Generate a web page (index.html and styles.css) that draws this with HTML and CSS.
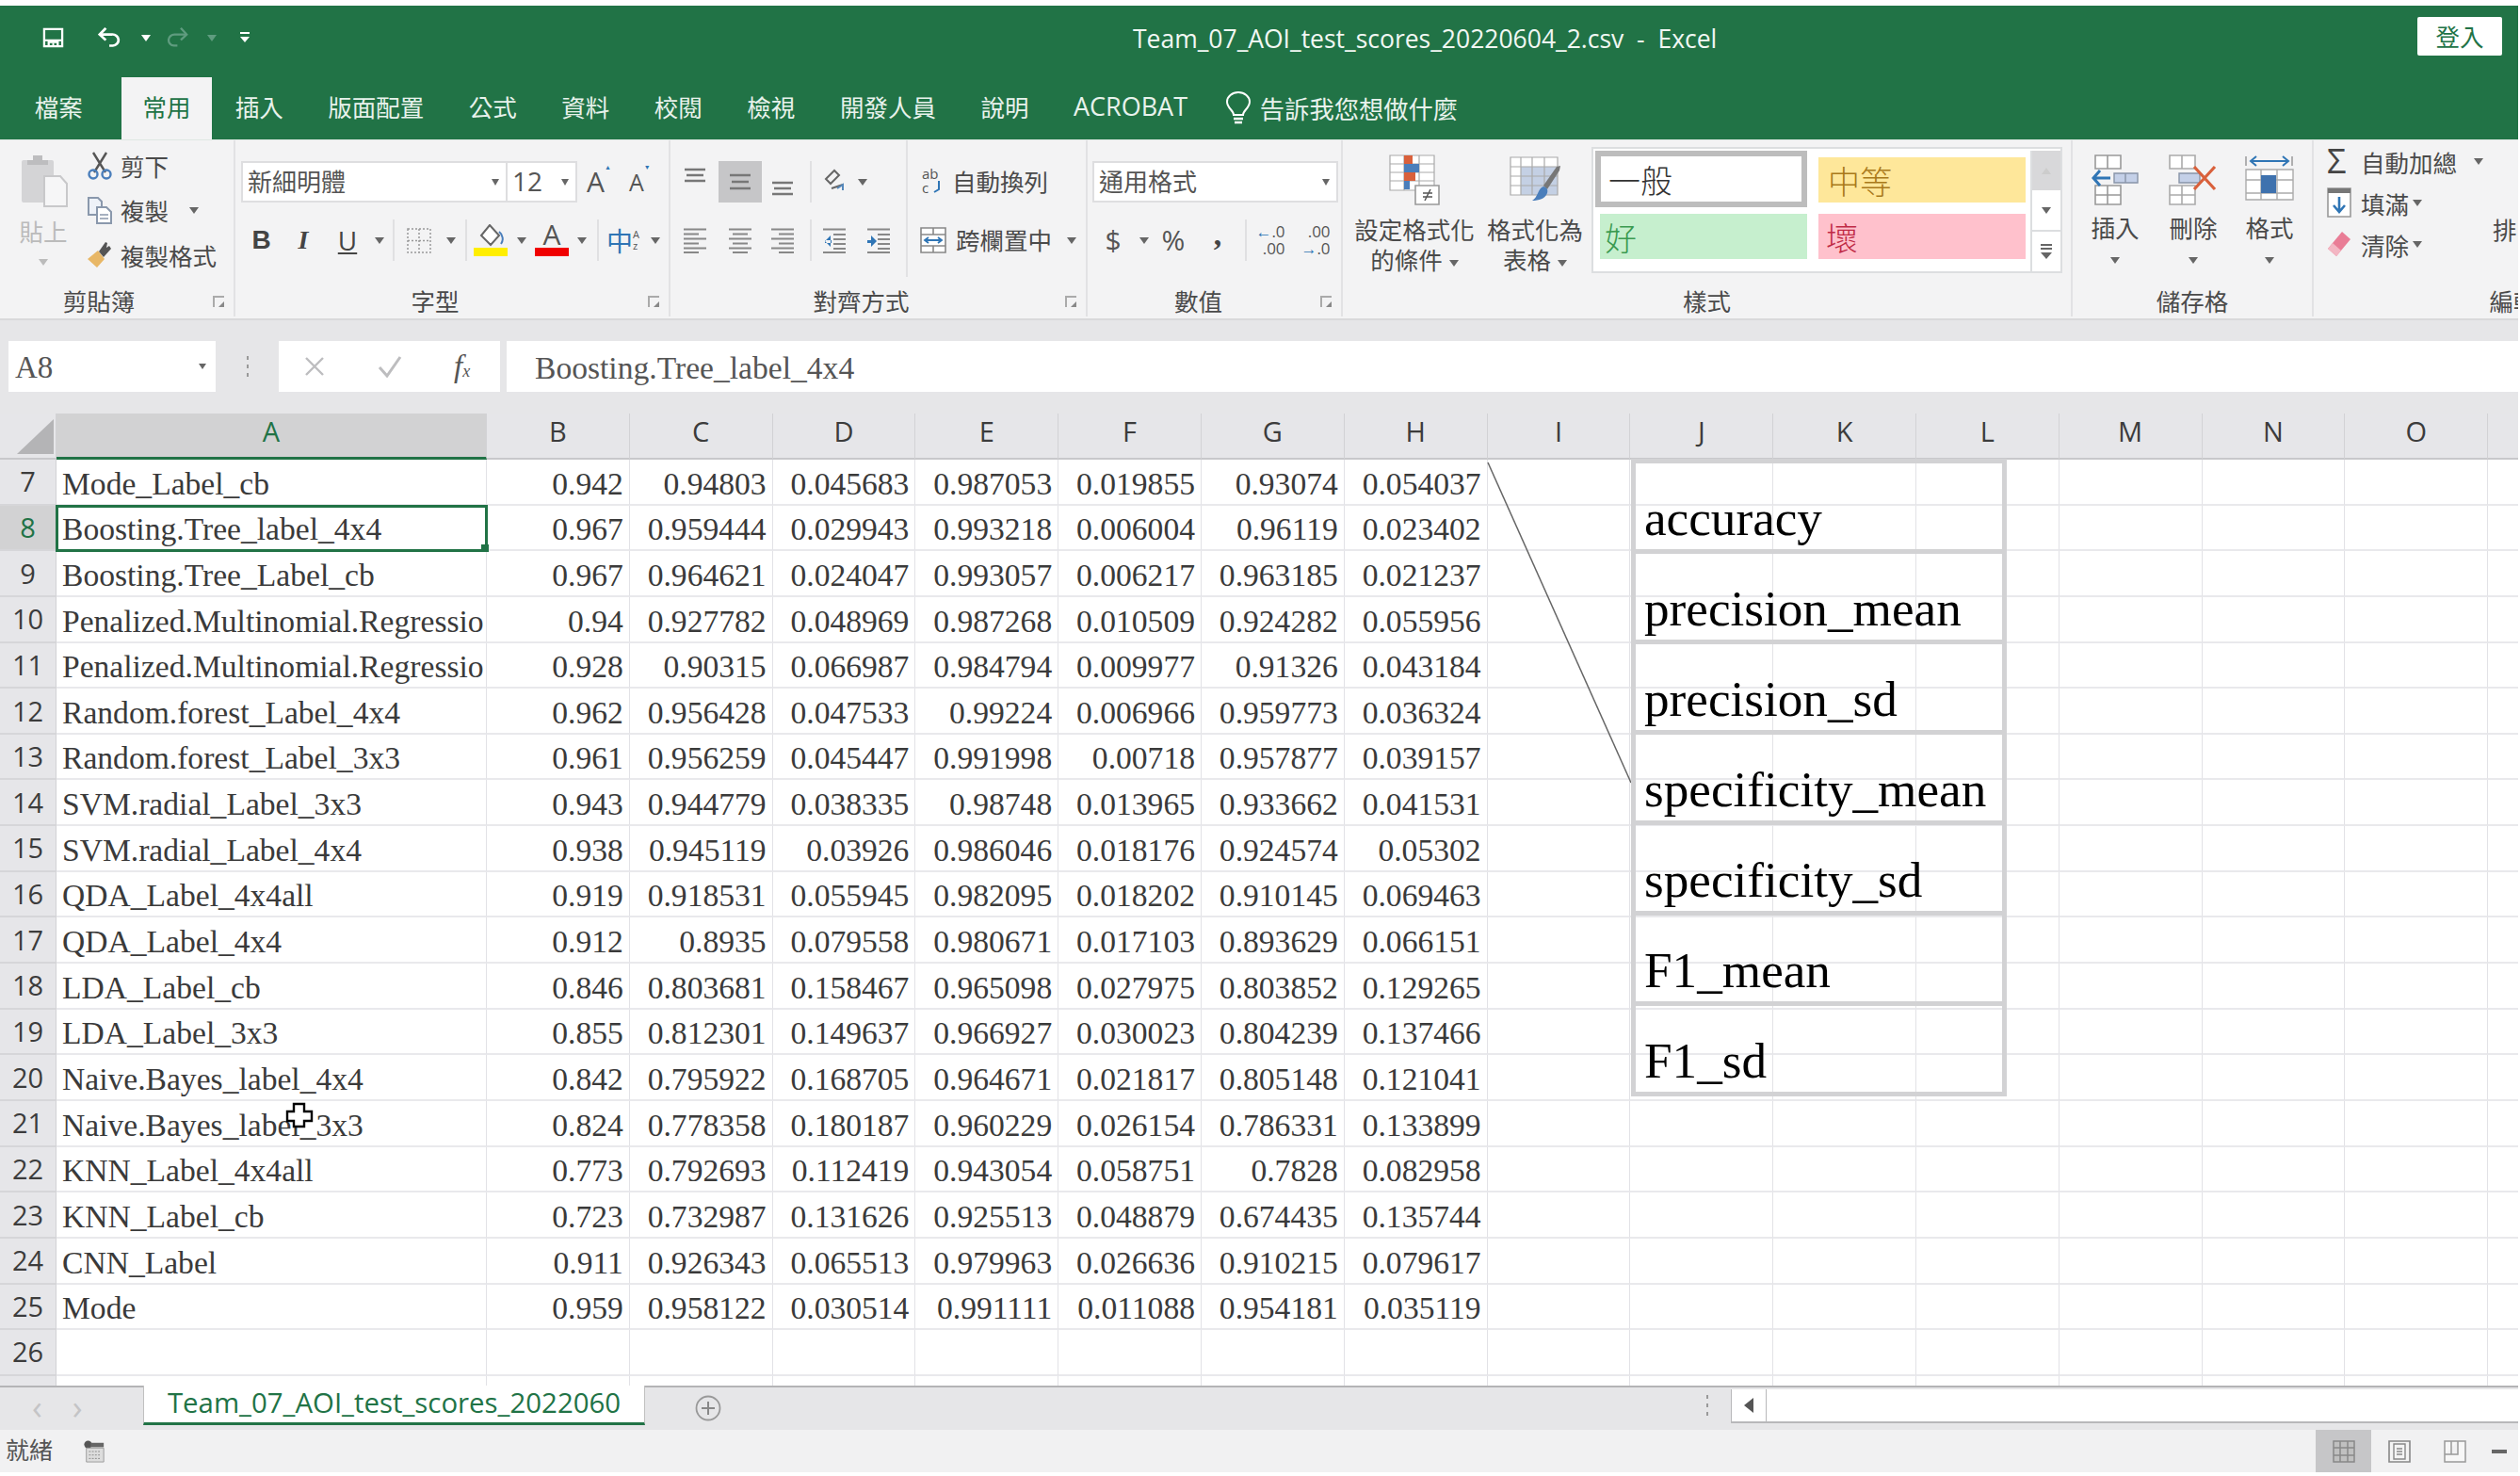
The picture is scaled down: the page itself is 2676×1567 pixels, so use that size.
FILE: index.html
```html
<!DOCTYPE html>
<html lang="zh-Hant">
<head>
<meta charset="utf-8">
<title>Team_07_AOI_test_scores_20220604_2.csv - Excel</title>
<link rel="stylesheet" href="styles.css">
</head>
<body>
<div class="app">
  <header class="titlebar">
    <div class="qat">
      <svg class="ic-save" width="23" height="22" viewBox="0 0 24 24" preserveAspectRatio="none"><path d="M2 2h20v20H2z" fill="none" stroke="#fff" stroke-width="2.4"/><path d="M2 15h20M7 22v-5h10v5" fill="none" stroke="#fff" stroke-width="2.4"/><path d="M12 18v4" stroke="#fff" stroke-width="2"/></svg>
      <svg class="ic-undo" width="26" height="22" viewBox="0 0 28 26" preserveAspectRatio="none"><path d="M3 9h13a7 7 0 0 1 1 14h-4" fill="none" stroke="#fff" stroke-width="3"/><path d="M9 1 2 9l7 7" fill="none" stroke="#fff" stroke-width="3"/></svg>
      <i class="arr arr-w"></i>
      <svg class="ic-redo" width="25" height="22" viewBox="0 0 28 26" preserveAspectRatio="none"><path d="M25 9H12a7 7 0 0 0-1 14h4" fill="none" stroke="#5f9c7f" stroke-width="2.6"/><path d="m19 1 7 8-7 7" fill="none" stroke="#5f9c7f" stroke-width="2.6"/></svg>
      <i class="arr arr-dim"></i>
      <svg class="ic-cust" width="10" height="12" viewBox="0 0 10 12"><path d="M0 0h10v2H0zM0 5h10L5 11z" fill="#fff"/></svg>
    </div>
    <div class="doc-title">Team_07_AOI_test_scores_20220604_2.csv&nbsp; - &nbsp;Excel</div>
    <div class="signin">登入</div>
  </header>

  <nav class="tabs">
    <span class="tab tab-file">檔案</span>
    <span class="tab tab-on">常用</span>
    <span class="tab">插入</span>
    <span class="tab">版面配置</span>
    <span class="tab">公式</span>
    <span class="tab">資料</span>
    <span class="tab">校閱</span>
    <span class="tab">檢視</span>
    <span class="tab">開發人員</span>
    <span class="tab">說明</span>
    <span class="tab tab-latin">ACROBAT</span>
    <span class="tell">
      <svg width="28" height="36" viewBox="0 0 28 36"><path d="M9 25c0-5-7-7-7-14a12 10 0 0 1 24 0c0 7-7 9-7 14z" fill="none" stroke="#fff" stroke-width="2"/><path d="M9 29h10M10 33h8" stroke="#fff" stroke-width="2.4"/></svg>
      <span>告訴我您想做什麼</span>
    </span>
  </nav>

  <section class="ribbon">
    <div class="group g-clip">
      <div class="gbody clip-body">
        <div class="paste">
          <svg width="52" height="56" viewBox="0 0 52 56"><rect x="2" y="6" width="34" height="45" rx="2" fill="#d4d4d6"/><path d="M14 6V1h10v5h6v5H8V6z" fill="#bdbdbf"/><path d="M26 23h17l7 8v24H26z" fill="#f6f6f7" stroke="#c8c8ca" stroke-width="2"/></svg>
          <span class="paste-t">貼上</span>
          <i class="arr arr-pale"></i>
        </div>
        <div class="clip-list">
          <div class="clip-row">
            <svg width="28" height="30" viewBox="0 0 28 30"><path d="m7 1 13 21M21 1 8 22" stroke="#555" stroke-width="2.4" fill="none"/><circle cx="7" cy="24" r="4.5" fill="none" stroke="#4a7ebb" stroke-width="2.4"/><circle cx="21" cy="24" r="4.5" fill="none" stroke="#4a7ebb" stroke-width="2.4"/></svg>
            <span>剪下</span>
          </div>
          <div class="clip-row">
            <svg width="28" height="30" viewBox="0 0 28 30"><path d="M2 2h10l4 4v14H2z" fill="#eef2f8" stroke="#8a98ac" stroke-width="2"/><path d="M11 12h10l5 5v12H11z" fill="#fff" stroke="#8a98ac" stroke-width="2"/><path d="M14 20h9M14 24h9" stroke="#8a98ac" stroke-width="1.6"/></svg>
            <span>複製</span><i class="arr clip-arr"></i>
          </div>
          <div class="clip-row">
            <svg width="28" height="30" viewBox="0 0 28 30"><path d="M1 19 12 10l7 9-8 9z" fill="#e8b766"/><path d="m13 11 5 6 8-9-2-3-3 2 1-5-2-1z" fill="#555"/></svg>
            <span>複製格式</span>
          </div>
        </div>
      </div>
      <div class="glabel">剪貼簿<i class="launch"></i></div>
    </div>

    <div class="group g-font">
      <div class="gbody stack">
        <div class="font-r1">
          <div class="combo combo-name"><span>新細明體</span><i class="arr"></i></div>
          <div class="combo combo-size"><span>12</span><i class="arr"></i></div>
          <span class="grow big">A<sup>▲</sup></span>
          <span class="grow small">A<sup>▼</sup></span>
        </div>
        <div class="font-r2 row2">
          <b class="fb">B</b>
          <em class="fi">I</em>
          <span class="fu">U</span>
          <i class="arr"></i><i class="sep"></i>
          <svg width="26" height="27" viewBox="0 0 26 27"><path d="M1 1h24v25H1zM1 13.500h24M13 1v25" fill="none" stroke="#999" stroke-width="1.5" stroke-dasharray="2 2"/></svg>
          <i class="arr"></i><i class="sep"></i>
          <svg width="36" height="34" viewBox="0 0 36 34"><path d="m17 1 10 11-9 10L8 12z" fill="#fff" stroke="#666" stroke-width="2"/><path d="M27 8c4 3 5 9 2 13" fill="none" stroke="#4a7ebb" stroke-width="2"/><rect y="25" width="36" height="9" fill="#ffee00"/></svg>
          <i class="arr"></i>
          <svg width="36" height="34" viewBox="0 0 36 34"><text x="18" y="22" text-anchor="middle" class="svg-a">A</text><rect y="25" width="36" height="9" fill="#f00000"/></svg>
          <i class="arr"></i><i class="sep"></i>
          <span class="zh">中<small>A<br>z</small></span>
          <i class="arr"></i>
        </div>
      </div>
      <div class="glabel">字型<i class="launch"></i></div>
    </div>

    <div class="group g-align">
      <div class="gbody align-body">
        <div class="align-l stack">
          <div class="align-r1">
            <svg class="al" width="24" height="34" viewBox="0 0 24 34"><path d="M1 4h22M3 10h18M1 16h22" stroke="#777" stroke-width="2.4"/></svg>
            <span class="al-on"><svg width="24" height="20" viewBox="0 0 24 20"><path d="M1 3h22M3 10h18M1 17h22" stroke="#777" stroke-width="2.4"/></svg></span>
            <svg class="al" width="24" height="34" viewBox="0 0 24 34"><path d="M1 18h22M3 24h18M1 30h22" stroke="#777" stroke-width="2.4"/></svg>
            <i class="sep"></i>
            <svg width="22" height="30" viewBox="0 0 22 30"><path d="m2 12 9-9 5 5-9 9zM8 22l12-4" fill="none" stroke="#666" stroke-width="2"/><path d="m14 22 6-4v6" fill="none" stroke="#5588bb" stroke-width="2"/></svg>
            <i class="arr"></i>
          </div>
          <div class="align-r2 row2">
            <svg width="24" height="27" viewBox="0 0 24 27"><path d="M0 1.500h24M0 6.500h16M0 11.500h24M0 16.500h16M0 21.500h24M0 26h16" stroke="#888" stroke-width="1.800"/></svg>
            <svg width="24" height="27" viewBox="0 0 24 27"><path d="M0 1.500h24M4 6.500h16M0 11.500h24M4 16.500h16M0 21.500h24M4 26h16" stroke="#888" stroke-width="1.800"/></svg>
            <svg width="24" height="27" viewBox="0 0 24 27"><path d="M0 1.500h24M8 6.500h16M0 11.500h24M8 16.500h16M0 21.500h24M8 26h16" stroke="#888" stroke-width="1.800"/></svg>
            <i class="sep"></i>
            <svg width="26" height="27" viewBox="0 0 26 27"><path d="M1 1.500h24M12 7h13M12 12h13M12 17h13M12 22h13M1 26h24" stroke="#888" stroke-width="1.800"/><path d="M9 8 3 14l6 6zM3 13h7v3H3z" fill="#2f75b5"/></svg>
            <svg width="26" height="27" viewBox="0 0 26 27"><path d="M1 1.500h24M12 7h13M12 12h13M12 17h13M12 22h13M1 26h24" stroke="#888" stroke-width="1.800"/><path d="m5 8 6 6-6 6zM1 13h6v3H1z" fill="#2f75b5"/></svg>
          </div>
        </div>
        <div class="align-m stack">
          <div class="ic-row">
            <svg width="24" height="30" viewBox="0 0 24 30"><text x="2" y="12" class="svg-ab">ab</text><text x="2" y="27" class="svg-ab">c</text><path d="M20 14v9l-5 3" fill="none" stroke="#2f75b5" stroke-width="2"/></svg>
            <span>自動換列</span>
          </div>
          <div class="ic-row row2">
            <svg width="28" height="28" viewBox="0 0 28 28"><path d="M1 1h26v26H1zM1 8h26M1 20h26M14 1v7M14 20v7" fill="#fff" stroke="#888" stroke-width="1.6"/><path d="M5 14h18M9 11l-4 3 4 3M19 11l4 3-4 3" fill="none" stroke="#2f75b5" stroke-width="1.800"/></svg>
            <span>跨欄置中</span><i class="arr merge-arr"></i>
          </div>
        </div>
      </div>
      <div class="glabel">對齊方式<i class="launch"></i></div>
    </div>

    <div class="group g-num">
      <div class="gbody stack">
        <div class="num-r1">
          <div class="combo combo-num"><span>通用格式</span><i class="arr"></i></div>
        </div>
        <div class="num-r2 row2">
          <span class="dollar">$</span>
          <i class="arr"></i>
          <span class="pct">%</span>
          <span class="comma">,</span>
          <i class="sep"></i>
          <span class="dec"><em>←</em>.0<br>.00</span>
          <span class="dec">.00<br><em>→</em>.0</span>
        </div>
      </div>
      <div class="glabel">數值<i class="launch"></i></div>
    </div>

    <div class="group g-style">
      <div class="gbody style-body">
        <div class="bigbtn bb-cond">
          <svg width="54" height="54" viewBox="0 0 54 54"><path d="M1 1h47v37H1zM1 10h47M1 19h47M1 28h47M16 1v37M32 1v37" fill="#fff" stroke="#aaa" stroke-width="1.2"/><rect x="16" y="1" width="9" height="9" fill="#d9603b"/><rect x="16" y="10" width="16" height="9" fill="#4a7ebb"/><rect x="16" y="19" width="12" height="9" fill="#d9603b"/><rect x="16" y="28" width="6" height="9" fill="#4a7ebb"/><path d="M28 33h25v20H28z" fill="#fff" stroke="#999" stroke-width="1.6"/><path d="M36 41h10M36 45h10M44 37l-6 12" fill="none" stroke="#555" stroke-width="1.5"/></svg>
          <span>設定格式化<br>的條件<i class="arr"></i></span>
        </div>
        <div class="bigbtn bb-table">
          <svg width="54" height="54" viewBox="0 0 54 54"><path d="M1 3h50v40H1z" fill="#fff"/><path d="M12 13h39v30H12z" fill="#c4d0e4"/><path d="M1 3h50v40H1zM1 13h50M1 23h50M1 33h50M12 3v40M24 3v40M37 3v40" fill="none" stroke="#aaa" stroke-width="1.2"/><path d="m36 33 14-20 4-1-1 5-13 20z" fill="#777"/><path d="M36 34c4 1 5 4 4 7-2 6-9 8-16 8 6-3 6-13 12-15z" fill="#4a7ebb"/></svg>
          <span>格式化為<br>表格<i class="arr"></i></span>
        </div>
        <div class="gallery">
          <div class="st st-normal">一般</div>
          <div class="st st-mid">中等</div>
          <div class="st st-good">好</div>
          <div class="st st-bad">壞</div>
          <div class="gal-scroll">
            <span class="gs gs-up"><i class="arr arr-up"></i></span>
            <span class="gs"><i class="arr"></i></span>
            <span class="gs gs-more"><svg width="14" height="18" viewBox="0 0 14 18"><path d="M1 2h12M1 6h12" stroke="#666" stroke-width="2"/><path d="M1 10h12l-6 7z" fill="#666"/></svg></span>
          </div>
        </div>
      </div>
      <div class="glabel">樣式</div>
    </div>

    <div class="group g-cells">
      <div class="gbody cells-body">
        <div class="cellbtn">
          <svg width="50" height="54" viewBox="0 0 50 54"><path d="M4 1h27v14H4zM17 1v14M4 33h27v20H4zM4 43h27M17 33v20" fill="#fff" stroke="#999" stroke-width="1.6"/><path d="M24 20h25v10H24zM36 20v10" fill="#c4d0e8" stroke="#8894a8" stroke-width="1.4"/><path d="M2 25h18M9 17l-7 8 7 8" fill="none" stroke="#2f75b5" stroke-width="3"/></svg>
          <span>插入</span><i class="arr"></i>
        </div>
        <div class="cellbtn">
          <svg width="52" height="54" viewBox="0 0 52 54"><path d="M1 1h27v14H1zM14 1v14M1 33h27v20H1zM1 43h27M14 33v20" fill="#fff" stroke="#aaa" stroke-width="1.6"/><path d="M11 20h22v10H11z" fill="#c4d0e8" stroke="#8894a8" stroke-width="1.4"/><path d="m27 13 22 24M49 13 27 37" stroke="#d9603b" stroke-width="3.200"/></svg>
          <span>刪除</span><i class="arr"></i>
        </div>
        <div class="cellbtn">
          <svg width="52" height="54" viewBox="0 0 52 54"><path d="M1 2v10M50 2v10" stroke="#999" stroke-width="1.5"/><path d="M6 7h40M12 2 6 7l6 5M40 2l6 5-6 5" fill="none" stroke="#2f75b5" stroke-width="2"/><path d="M1 16h50v32H1zM1 27h50M1 41h50M17 16v32M34 16v32" fill="#fff" stroke="#aaa" stroke-width="1.4"/><rect x="17" y="22" width="16" height="19" fill="#3f72ae"/></svg>
          <span>格式</span><i class="arr"></i>
        </div>
      </div>
      <div class="glabel">儲存格</div>
    </div>

    <div class="group g-edit">
      <div class="gbody edit-body">
        <div class="edit-list">
          <div class="edit-row"><span class="sigma">Σ</span><span>自動加總</span><i class="arr e1"></i></div>
          <div class="edit-row">
            <svg width="26" height="32" viewBox="0 0 26 32"><path d="M1 1h24v30H1z" fill="#fff" stroke="#999" stroke-width="1.6"/><rect x="1" y="1" width="24" height="5" fill="#777"/><path d="M13 10v15M7 19l6 7 6-7" fill="none" stroke="#2f75b5" stroke-width="2.6"/></svg>
            <span>填滿</span><i class="arr"></i>
          </div>
          <div class="edit-row">
            <svg width="26" height="28" viewBox="0 0 26 28"><path d="M16 1 25 9 10 27 1 19z" fill="#e97d96"/><path d="M1 19 6 13l9 8-5 6z" fill="#f3b6c3"/></svg>
            <span>清除</span><i class="arr"></i>
          </div>
        </div>
        <div class="sort">排</div>
      </div>
      <div class="glabel">編輯</div>
    </div>
  </section>

  <section class="fbar">
    <div class="namebox"><span>A8</span><i class="arr arr-tiny"></i></div>
    <div class="fdots"><i></i><i></i><i></i></div>
    <div class="fbtns">
      <svg width="24" height="24" viewBox="0 0 24 24"><path d="m3 3 18 18M21 3 3 21" stroke="#bdbdbf" stroke-width="2.4"/></svg>
      <svg width="26" height="24" viewBox="0 0 26 24"><path d="m2 13 8 9L24 2" fill="none" stroke="#bdbdbf" stroke-width="3"/></svg>
      <span class="fx">f<small>x</small></span>
    </div>
    <div class="finput">Boosting.Tree_label_4x4</div>
  </section>

  <main class="sheet">
    <table class="grid">
      <colgroup><col class="c-rh"><col class="c-a"><col class="c-n" span="15"></colgroup>
      <thead>
        <tr><th class="corner"><svg width="40" height="38" viewBox="0 0 40 38"><path d="M39 0v37H0z" fill="#b4b4b6"/></svg></th><th class="h-sel">A</th><th>B</th><th>C</th><th>D</th><th>E</th><th>F</th><th>G</th><th>H</th><th>I</th><th>J</th><th>K</th><th>L</th><th>M</th><th>N</th><th>O</th><th></th></tr>
      </thead>
      <tbody>
        <tr><th>7</th><td class="t">Mode_Label_cb</td><td>0.942</td><td>0.94803</td><td>0.045683</td><td>0.987053</td><td>0.019855</td><td>0.93074</td><td>0.054037</td><td></td><td></td><td></td><td></td><td></td><td></td><td></td><td></td></tr>
        <tr><th class="rh-sel">8</th><td class="t active">Boosting.Tree_label_4x4<i class="handle"></i></td><td>0.967</td><td>0.959444</td><td>0.029943</td><td>0.993218</td><td>0.006004</td><td>0.96119</td><td>0.023402</td><td></td><td></td><td></td><td></td><td></td><td></td><td></td><td></td></tr>
        <tr><th>9</th><td class="t">Boosting.Tree_Label_cb</td><td>0.967</td><td>0.964621</td><td>0.024047</td><td>0.993057</td><td>0.006217</td><td>0.963185</td><td>0.021237</td><td></td><td></td><td></td><td></td><td></td><td></td><td></td><td></td></tr>
        <tr><th>10</th><td class="t">Penalized.Multinomial.Regressio</td><td>0.94</td><td>0.927782</td><td>0.048969</td><td>0.987268</td><td>0.010509</td><td>0.924282</td><td>0.055956</td><td></td><td></td><td></td><td></td><td></td><td></td><td></td><td></td></tr>
        <tr><th>11</th><td class="t">Penalized.Multinomial.Regressio</td><td>0.928</td><td>0.90315</td><td>0.066987</td><td>0.984794</td><td>0.009977</td><td>0.91326</td><td>0.043184</td><td></td><td></td><td></td><td></td><td></td><td></td><td></td><td></td></tr>
        <tr><th>12</th><td class="t">Random.forest_Label_4x4</td><td>0.962</td><td>0.956428</td><td>0.047533</td><td>0.99224</td><td>0.006966</td><td>0.959773</td><td>0.036324</td><td></td><td></td><td></td><td></td><td></td><td></td><td></td><td></td></tr>
        <tr><th>13</th><td class="t">Random.forest_Label_3x3</td><td>0.961</td><td>0.956259</td><td>0.045447</td><td>0.991998</td><td>0.00718</td><td>0.957877</td><td>0.039157</td><td></td><td></td><td></td><td></td><td></td><td></td><td></td><td></td></tr>
        <tr><th>14</th><td class="t">SVM.radial_Label_3x3</td><td>0.943</td><td>0.944779</td><td>0.038335</td><td>0.98748</td><td>0.013965</td><td>0.933662</td><td>0.041531</td><td></td><td></td><td></td><td></td><td></td><td></td><td></td><td></td></tr>
        <tr><th>15</th><td class="t">SVM.radial_Label_4x4</td><td>0.938</td><td>0.945119</td><td>0.03926</td><td>0.986046</td><td>0.018176</td><td>0.924574</td><td>0.05302</td><td></td><td></td><td></td><td></td><td></td><td></td><td></td><td></td></tr>
        <tr><th>16</th><td class="t">QDA_Label_4x4all</td><td>0.919</td><td>0.918531</td><td>0.055945</td><td>0.982095</td><td>0.018202</td><td>0.910145</td><td>0.069463</td><td></td><td></td><td></td><td></td><td></td><td></td><td></td><td></td></tr>
        <tr><th>17</th><td class="t">QDA_Label_4x4</td><td>0.912</td><td>0.8935</td><td>0.079558</td><td>0.980671</td><td>0.017103</td><td>0.893629</td><td>0.066151</td><td></td><td></td><td></td><td></td><td></td><td></td><td></td><td></td></tr>
        <tr><th>18</th><td class="t">LDA_Label_cb</td><td>0.846</td><td>0.803681</td><td>0.158467</td><td>0.965098</td><td>0.027975</td><td>0.803852</td><td>0.129265</td><td></td><td></td><td></td><td></td><td></td><td></td><td></td><td></td></tr>
        <tr><th>19</th><td class="t">LDA_Label_3x3</td><td>0.855</td><td>0.812301</td><td>0.149637</td><td>0.966927</td><td>0.030023</td><td>0.804239</td><td>0.137466</td><td></td><td></td><td></td><td></td><td></td><td></td><td></td><td></td></tr>
        <tr><th>20</th><td class="t">Naive.Bayes_label_4x4</td><td>0.842</td><td>0.795922</td><td>0.168705</td><td>0.964671</td><td>0.021817</td><td>0.805148</td><td>0.121041</td><td></td><td></td><td></td><td></td><td></td><td></td><td></td><td></td></tr>
        <tr><th>21</th><td class="t">Naive.Bayes_label_3x3</td><td>0.824</td><td>0.778358</td><td>0.180187</td><td>0.960229</td><td>0.026154</td><td>0.786331</td><td>0.133899</td><td></td><td></td><td></td><td></td><td></td><td></td><td></td><td></td></tr>
        <tr><th>22</th><td class="t">KNN_Label_4x4all</td><td>0.773</td><td>0.792693</td><td>0.112419</td><td>0.943054</td><td>0.058751</td><td>0.7828</td><td>0.082958</td><td></td><td></td><td></td><td></td><td></td><td></td><td></td><td></td></tr>
        <tr><th>23</th><td class="t">KNN_Label_cb</td><td>0.723</td><td>0.732987</td><td>0.131626</td><td>0.925513</td><td>0.048879</td><td>0.674435</td><td>0.135744</td><td></td><td></td><td></td><td></td><td></td><td></td><td></td><td></td></tr>
        <tr><th>24</th><td class="t">CNN_Label</td><td>0.911</td><td>0.926343</td><td>0.065513</td><td>0.979963</td><td>0.026636</td><td>0.910215</td><td>0.079617</td><td></td><td></td><td></td><td></td><td></td><td></td><td></td><td></td></tr>
        <tr><th>25</th><td class="t">Mode</td><td>0.959</td><td>0.958122</td><td>0.030514</td><td>0.991111</td><td>0.011088</td><td>0.954181</td><td>0.035119</td><td></td><td></td><td></td><td></td><td></td><td></td><td></td><td></td></tr>
        <tr><th>26</th><td></td><td></td><td></td><td></td><td></td><td></td><td></td><td></td><td></td><td></td><td></td><td></td><td></td><td></td><td></td><td></td></tr>
        <tr><th></th><td></td><td></td><td></td><td></td><td></td><td></td><td></td><td></td><td></td><td></td><td></td><td></td><td></td><td></td><td></td><td></td></tr>
      </tbody>
    </table>
    <svg class="shape-line" width="160" height="345" viewBox="0 0 160 345"><path d="M3 2 155 342" stroke="#666" stroke-width="1.5" fill="none"/></svg>
    <ul class="textbox">
      <li>accuracy</li>
      <li>precision_mean</li>
      <li>precision_sd</li>
      <li>specificity_mean</li>
      <li>specificity_sd</li>
      <li>F1_mean</li>
      <li>F1_sd</li>
    </ul>
    <svg class="cursor" width="30" height="28" viewBox="0 0 30 28"><path d="M9 2h11v8h8v10h-8v6H9v-6H2V10h7z" fill="#fff" stroke="#000" stroke-width="2.4"/></svg>
  </main>

  <section class="sheetbar">
    <div class="sheet-nav"><span>‹</span><span>›</span></div>
    <div class="sheet-tab">Team_07_AOI_test_scores_2022060</div>
    <svg class="addsheet" width="28" height="28" viewBox="0 0 28 28"><circle cx="14" cy="14" r="12.5" fill="none" stroke="#999" stroke-width="1.8"/><path d="M14 7v14M7 14h14" stroke="#888" stroke-width="2"/></svg>
    <div class="sb-dots"><i></i><i></i><i></i></div>
    <div class="hscroll"><span class="hs-left"><svg width="10" height="16" viewBox="0 0 10 16"><path d="M10 0v16L0 8z" fill="#555"/></svg></span></div>
  </section>

  <footer class="status">
    <span class="ready">就緒</span>
    <svg class="macro" width="24" height="24" viewBox="0 0 24 26"><circle cx="5" cy="5" r="4.5" fill="#555"/><path d="M3 9h20v16H3z" fill="#ddd" stroke="#999"/><path d="M8 3h15v5H8z" fill="#666"/><path d="M6 13h14M6 17h14M6 21h14" stroke="#888" stroke-dasharray="2 1.5"/></svg>
    <div class="views">
      <span class="view view-on"><svg width="24" height="24" viewBox="0 0 24 24"><path d="M1 1h22v22H1zM1 8h22M1 16h22M8 1v22M16 1v22" fill="#c0c0c0" stroke="#888" stroke-width="1.5"/></svg></span>
      <span class="view"><svg width="24" height="24" viewBox="0 0 24 24"><path d="M1 1h22v22H1z" fill="#f4f4f4" stroke="#888" stroke-width="1.6"/><path d="M6 4h12v16H6z" fill="none" stroke="#888" stroke-width="1.4"/><path d="M9 9h6M9 12h6M9 15h6" stroke="#888" stroke-width="1.4"/></svg></span>
      <span class="view"><svg width="24" height="24" viewBox="0 0 24 24"><path d="M1 1h22v22H1zM1 15h14V1M8 1v14" fill="#f7f7f7" stroke="#999" stroke-width="1.5"/></svg></span>
      <span class="zoom-minus"></span>
    </div>
  </footer>
</div>
</body>
</html>
```
FILE: styles.css
```css
* { box-sizing: border-box; }
html, body { margin: 0; padding: 0; background: #fff; overflow: hidden; }
body { width: 2676px; height: 1567px; font-family: "Noto Sans CJK TC", "Open Sans", sans-serif; color: #444; }
i { font-style: normal; }
svg { display: block; flex: none; }
.app { width: 2674px; height: 1567px; padding: 6px 0 5px; display: flex; flex-direction: column; overflow: hidden; }

/* shared bits */
.arr { display: block; flex: none; width: 0; height: 0; border-left: 5.5px solid transparent; border-right: 5.5px solid transparent; border-top: 7px solid #666; }
.arr-w { border-top-color: #fff; }
.arr-dim { border-top-color: #5f9c7f; }
.arr-pale { border-top-color: #bbb; }
.arr-up { border-top: 0; border-bottom: 7px solid #ccc; }
.sep { display: block; width: 2px; height: 44px; background: #e0e0e2; justify-self: center; }
.launch { position: absolute; left: 100%; top: 10px; width: 12px; height: 12px; margin-left: -22px; border-left: 2px solid #aaa; border-top: 2px solid #aaa; }
.launch::after { content: ""; position: absolute; right: 0; bottom: 0; border-left: 6px solid transparent; border-bottom: 6px solid #888; }

/* title bar */
.titlebar { height: 76px; flex: none; background: #217346; display: flex; position: relative; color: #fff; }
.qat { width: 1203px; flex: none; display: flex; align-items: center; height: 46px; margin-top: 11px; }
.ic-save { margin-left: 45px; }
.ic-undo { margin-left: 36px; }
.qat .arr-w { margin-left: 20px; }
.ic-redo { margin-left: 15px; }
.qat .arr-dim { margin-left: 20px; }
.ic-cust { margin-left: 25px; }
.doc-title { font: 26.500px/36px "Open Sans", sans-serif; margin-top: 17px; color: #f1f7f3; white-space: nowrap; flex: 1; }
.signin { position: absolute; left: 2567px; top: 12px; width: 90px; height: 41px; background: #fff; border-radius: 2px; color: #217346; font-size: 25.500px; line-height: 40px; text-align: center; }

/* tabs */
.tabs { height: 66px; flex: none; background: #217346; display: flex; align-items: stretch; padding-left: 13px; color: #e8f2ec; font-size: 25.500px; line-height: 62px; }
.tab { padding: 0 23.750px; white-space: nowrap; }
.tab-file { margin-right: 17.500px; }
.tab-on { padding: 0 22.500px; margin-right: 1px; background: #f3f3f4; color: #217346; }
.tab-latin { font: 27px/62px "Open Sans", sans-serif; }
.tell { display: flex; align-items: center; gap: 9px; margin-left: 16px; font-size: 26.300px; }
.tell span { line-height: 64px; }

/* ribbon */
.ribbon { height: 192px; flex: none; background: #f3f3f4; border-top: 1px solid #dfe8e3; border-bottom: 2px solid #d9d9db; display: flex; overflow: hidden; font-size: 25.500px; color: #4a4a4a; }
.group { flex: none; display: flex; flex-direction: column; border-right: 2px solid #e2e2e4; margin-bottom: 2px; }
.gbody { height: 155px; flex: none; }
.glabel { position: relative; height: 32px; line-height: 30px; text-align: center; white-space: nowrap; }
.stack { display: flex; flex-direction: column; padding-top: 22px; }
.row2 { margin-top: 18px; height: 44px; align-items: center; }
.g-clip { width: 250px; }
.g-clip .glabel { padding-right: 38px; }
.g-font { width: 462px; }
.g-font .glabel { padding-right: 36px; }
.g-align { width: 443px; }
.g-align .glabel { padding-right: 36px; }
.g-num { width: 271px; }
.g-num .glabel { padding-right: 34px; }
.g-style { width: 775px; }
.g-cells { width: 256px; }
.g-edit { width: 424px; border-right: 0; flex: none; }

/* clipboard */
.clip-body { display: flex; }
.paste { width: 92px; display: flex; flex-direction: column; align-items: center; padding-top: 15px; color: #bbb; }
.paste svg { margin-left: 2px; }
.paste-t { line-height: 32px; margin-top: 9px; }
.paste .arr { margin-top: 14px; }
.clip-list { padding-top: 3px; }
.clip-row { height: 47.500px; display: flex; align-items: center; gap: 8px; line-height: 40px; white-space: nowrap; }
.clip-arr { margin-left: 14px; }

/* font */
.font-r1 { display: flex; align-items: center; height: 44px; padding-left: 6px; }
.combo { height: 44px; background: #fff; border: 2px solid #dedee0; display: flex; align-items: center; justify-content: space-between; padding: 0 7px 0 5px; color: #555; font-size: 26px; flex: none; }
.combo span { margin-top: -3px; }
.combo .arr { border-left-width: 4.500px; border-right-width: 4.500px; border-top-width: 7px; }
.combo-name { width: 282px; border-right-width: 1px; }
.combo-size { width: 75px; border-left-width: 1px; font: 28px "Open Sans", sans-serif; }
.grow { font-family: "Open Sans", sans-serif; color: #555; line-height: 40px; position: relative; display: block; }
.grow sup { position: absolute; font-size: 7px; color: #2f75b5; top: -2px; line-height: 14px; }
.big { font-size: 30px; margin-left: 10px; }
.small { font-size: 25px; margin-left: 26px; }
.font-r2 { display: grid; grid-template-columns: 43px 46px 48px 20px 10px 44px 23px 10px 42px 24px 40px 24px 10px 43px 25px; padding-left: 6px; justify-items: center; }
.fb, .fi, .fu { font: 700 28px/44px "Liberation Sans", sans-serif; color: #444; }
.fi { font: italic 700 28px/44px "Liberation Serif", serif; }
.fu { font: 400 28px/44px "Open Sans", sans-serif; text-decoration: underline; }
.svg-a { font: 30px "Open Sans", sans-serif; fill: #555; }
.zh { font-size: 28px; color: #2f75b5; display: flex; align-items: center; line-height: 44px; }
.zh small { font: 11px/12px "Open Sans", sans-serif; color: #555; }

/* alignment */
.align-body { display: flex; }
.align-l { width: 252px; flex: none; border-right: 2px solid #e2e2e4; height: 145px; }
.align-r1, .align-r2 { display: grid; justify-items: center; align-items: center; }
.align-r1 { grid-template-columns: 51px 46px 44px 16px 34px 26px; height: 44px; }
.align-r2 { grid-template-columns: 51px 46px 44px 16px 34px 60px; }
.al-on { width: 46px; height: 44px; background: #c6c6c8; display: flex; align-items: center; justify-content: center; }
.align-m { padding-left: 13px; }
.ic-row { display: flex; align-items: center; gap: 10px; height: 44px; white-space: nowrap; }
.ic-row span { margin-top: -3px; }
.merge-arr { margin-left: 6px; }
.svg-ab { font: 15px "Open Sans", sans-serif; fill: #555; }

/* number */
.num-r1 { padding-left: 5px; height: 44px; }
.combo-num { width: 261px; }
.num-r2 { display: grid; grid-template-columns: 54px 12px 50px 44px 16px 36px 60px; justify-items: center; }
.dollar { font: 30px/44px "Open Sans", sans-serif; color: #555; }
.pct { font: 30px/44px "Open Sans", sans-serif; color: #555; }
.comma { font: 700 34px/36px "Liberation Serif", serif; color: #444; margin-top: -12px; }
.dec { font: 17px/18px "Open Sans", sans-serif; color: #555; text-align: right; }
.dec em { color: #2f75b5; font-style: normal; }

/* styles */
.style-body { display: flex; }
.bigbtn { display: flex; flex-direction: column; align-items: center; padding-top: 15px; flex: none; }
.bb-cond { width: 152px; }
.bb-table { width: 104px; }
.bigbtn span { margin-top: 9px; line-height: 32px; text-align: center; white-space: nowrap; }
.bigbtn .arr { display: inline-block; margin-left: 7px; vertical-align: middle; }
.gallery { width: 500px; height: 134px; margin: 7px 0 0 8px; background: #fff; border: 2px solid #dcdee0; display: grid; grid-template-columns: 225px 12px 220px auto; grid-template-rows: 64px 64px; position: relative; padding: 2px 0 0 2px; font-weight: 300; }
.st { font-size: 34px; padding-left: 10px; display: flex; align-items: center; }
.st-normal { grid-column: 1; grid-row: 1; border: 6px solid #bdbdbd; color: #333; padding-left: 8px; height: 60px; }
.st-mid { grid-column: 3; grid-row: 1; background: #fee79a; color: #a9791a; height: 48px; margin-top: 7px; }
.st-good { grid-column: 1; grid-row: 2; background: #c6efce; color: #3a9a50; height: 48px; margin: 3px 0 0 5px; padding-left: 5px; }
.st-bad { grid-column: 3; grid-row: 2; background: #ffc1cc; color: #c02a45; height: 48px; margin-top: 3px; padding-left: 8px; }
.gal-scroll { grid-column: 4; grid-row: 1 / 3; position: absolute; right: 0; top: 0; bottom: 0; width: 32px; border-left: 2px solid #dcdee0; display: flex; flex-direction: column; }
.gs { flex: 1; display: flex; align-items: center; justify-content: center; background: #fff; }
.gs-up { background: #d8d8da; }
.gs-more { border-top: 2px solid #dcdee0; }

/* cells */
.cells-body { display: grid; grid-template-columns: 90px 76px 86px; }
.cellbtn { display: flex; flex-direction: column; align-items: center; padding-top: 15px; }
.cellbtn span { margin-top: 7px; line-height: 32px; }
.cellbtn .arr { margin-top: 16px; }

/* editing */
.edit-body { display: flex; }
.edit-list { width: 190px; flex: none; padding: 0 0 0 14px; }
.edit-row { height: 44px; display: flex; align-items: center; gap: 10px; white-space: nowrap; }
.edit-row .arr { margin-left: -6px; }
.edit-row .e1 { margin-left: 8px; }
.sigma { font: 36px/44px "Open Sans", sans-serif; color: #444; width: 26px; }
.sort { line-height: 32px; padding-top: 78px; }

/* formula bar */
.fbar { height: 99px; flex: none; background: #e6e6e8; padding: 22px 0 23px 9px; display: flex; }
.namebox { width: 220px; background: #fff; display: flex; align-items: center; justify-content: space-between; padding: 0 0 0 7px; font: 33px "Liberation Serif", serif; color: #555; }
.namebox span { margin-top: 3px; }
.arr-tiny { border-left-width: 4px; border-right-width: 4px; border-top-width: 6px; margin-right: 10px; }
.fdots { width: 67px; display: flex; flex-direction: column; align-items: center; justify-content: center; gap: 5px; }
.fdots i, .sb-dots i { display: block; width: 2px; height: 4px; background: #999; }
.fbtns { width: 235px; background: #fff; display: flex; align-items: center; padding-left: 26px; gap: 55px; }
.fx { font: italic 33px "Liberation Serif", serif; color: #555; }
.fx small { font-size: 18px; }
.finput { flex: 1; margin-left: 7px; background: #fff; font: 33.600px/58px "Liberation Serif", serif; color: #555; padding-left: 30px; }

/* sheet */
.sheet { height: 1032px; flex: none; position: relative; overflow: hidden; background: #fff; }
.grid { table-layout: fixed; border-collapse: separate; border-spacing: 0; width: 2794px; font: 33.600px "Liberation Serif", serif; color: #3a3a3a; }
.c-rh { width: 60px; }
.c-a { width: 457px; }
.c-n { width: 151.800px; }
.grid th { font: 29px/30px "Open Sans", sans-serif; color: #3c3c3c; background: #e6e6e9; font-weight: 400; padding: 0; border-right: 1px solid #d2d2d5; }
.grid thead th { height: 49px; border-bottom: 2px solid #c8c8cb; padding-bottom: 10px; }
.grid thead .corner { padding: 6px 0 3px 18px; vertical-align: top; }
.grid thead .h-sel { background: #d2d2d3; color: #217346; border-bottom: 3px solid #217346; padding-bottom: 9px; }
.grid tbody th { height: 48.650px; border-bottom: 2px solid #d6d6d9; }
.grid tbody .rh-sel { background: #d2d2d3; color: #217346; }
.grid td { height: 48.650px; padding: 0 6px 2px; line-height: 38px; vertical-align: bottom; text-align: right; white-space: nowrap; border-right: 1px solid #e2e2e6; border-bottom: 2px solid #e9e9ec; }
.grid td.t { text-align: left; }
.grid td.active { position: relative; outline: 3px solid #217346; outline-offset: -2px; }
.handle { position: absolute; right: -3px; bottom: -3px; width: 8px; height: 8px; background: #217346; }
.shape-line { position: absolute; left: 1577px; top: 50px; }
.textbox { position: absolute; left: 1732px; top: 48px; width: 399px; margin: 0; padding: 0; list-style: none; border: solid #d2d2d4; border-width: 5px 5px 0; font: 53.200px/60px "Liberation Serif", serif; color: #000; }
.textbox li { height: 96px; border-bottom: 5px solid #d2d2d4; padding: 0 0 2px 9px; display: flex; align-items: flex-end; white-space: nowrap; }
.cursor { position: absolute; left: 303px; top: 731px; }

/* sheet tabs */
.sheetbar { height: 47px; flex: none; background: #e6e6e8; border-top: 2px solid #b4b4b6; display: flex; align-items: flex-start; position: relative; }
.sheet-nav { width: 152px; display: flex; padding-left: 34px; gap: 32px; color: #c4c4c6; font: 36px/42px "Open Sans", sans-serif; }
.sheet-tab { width: 533px; height: 42px; margin-top: -2px; background: #fff; border-bottom: 3px solid #217346; color: #217346; font: 29.400px/36px "Open Sans", sans-serif; text-align: center; white-space: nowrap; overflow: hidden; border-left: 1px solid #c0c0c0; border-right: 1px solid #c0c0c0; }
.addsheet { margin: 8px 0 0 53px; }
.sb-dots { position: absolute; left: 1812px; top: 8px; display: flex; flex-direction: column; gap: 5px; }
.hscroll { position: absolute; left: 1838px; right: 0; top: 2px; height: 36px; background: #fff; border: solid #b8b8ba; border-width: 0 0 2px 1px; display: flex; }
.hs-left { width: 37px; border-right: 1px solid #b8b8ba; display: flex; align-items: center; justify-content: center; }

/* status bar */
.status { height: 45px; flex: none; background: #f1f1f2; display: flex; align-items: center; font-size: 25px; color: #555; }
.ready { margin-left: 6px; line-height: 40px; margin-top: -5px; }
.macro { margin-left: 32px; }
.views { margin-left: auto; height: 100%; display: flex; align-items: center; }
.view { width: 59px; height: 100%; display: flex; align-items: center; justify-content: center; }
.view-on { background: #c6c6c8; }
.zoom-minus { width: 16px; height: 4px; background: #666; margin: 0 12px 0 10px; }
```
